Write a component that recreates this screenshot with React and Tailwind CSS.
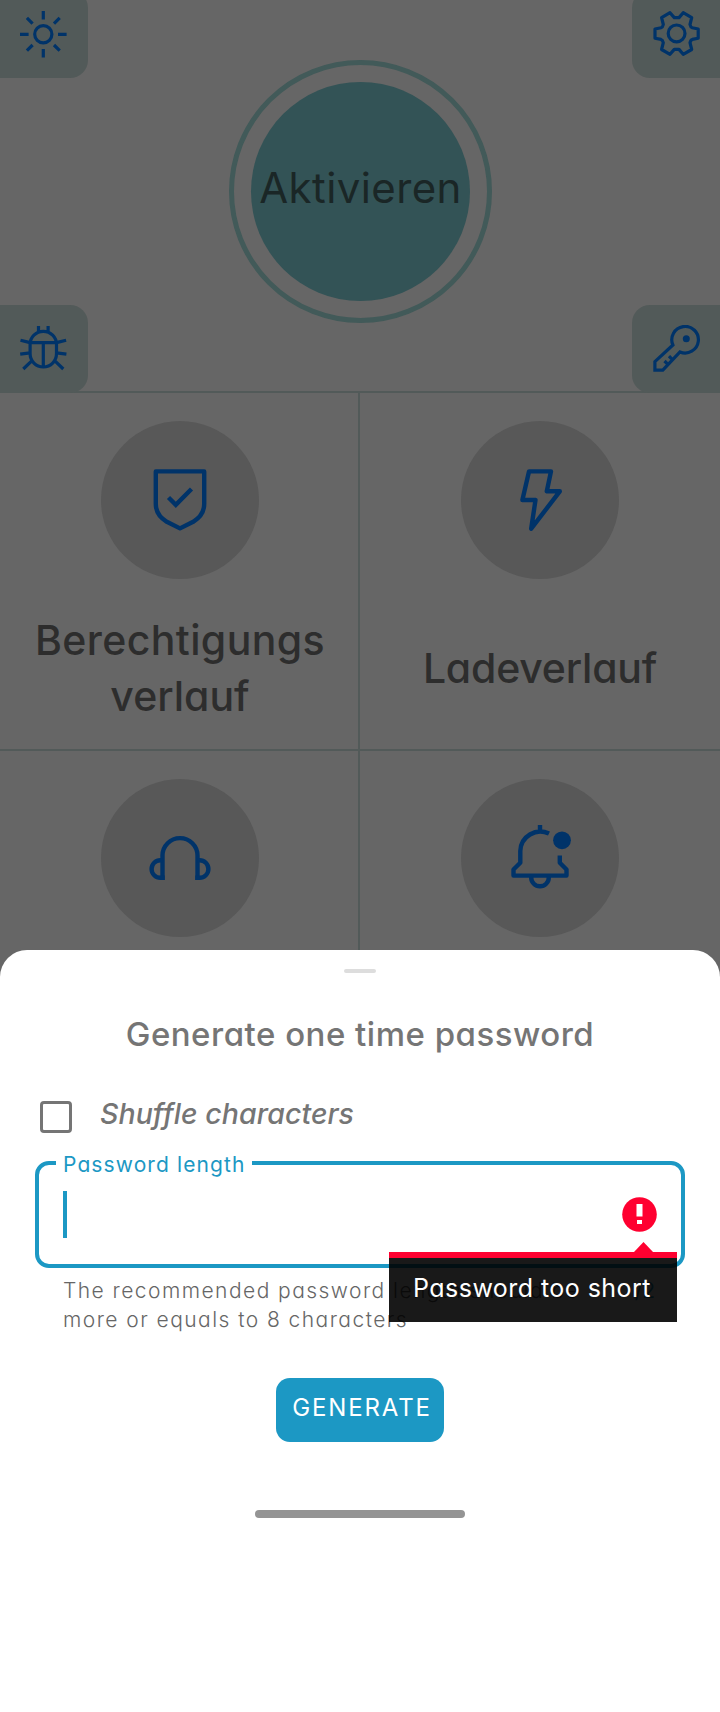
const C = '#003369';

function Tab({ side, children }) {
  const shape = side === 'left' ? 'rounded-r-[18px] pr-0.5' : 'rounded-l-[18px] pl-0.5';
  return <div className={`flex h-[88px] w-[88px] items-center justify-center bg-[#525a59] ${shape}`}>{children}</div>;
}

// Small icons share a 48px canvas centred in each tab.
function TabIcon({ children }) {
  return (
    <svg width="48" height="48" viewBox="0 0 48 48" fill="none" stroke={C} strokeWidth="3.2">
      {children}
    </svg>
  );
}

function Sun() {
  return (
    <TabIcon>
      <circle cx="24.3" cy="24.3" r="8.6" />
      <path d="M24.300 1v8.600M24.300 39v8.600M1 24.300h8.600M39 24.300h8.600M7.900 7.900l5.700 5.700M35 35l5.700 5.700M40.700 7.900l-5.700 5.700M13.600 35l-5.700 5.700" />
    </TabIcon>
  );
}

function Bug() {
  return (
    <TabIcon>
      <path d="M24.300 6.300c7.400 0 13.200 5.800 13.200 13.200v9c0 7.600-5.800 13.400-13.200 13.400S11.100 36.100 11.100 28.500v-9C11.100 12.100 16.900 6.300 24.300 6.300zM11.100 17.700h26.400M24.300 17.700v24M19.500 1v6M29.100 1v6M1.500 15.200l9.600 2.400M47.100 15.200l-9.600 2.400M1.200 29.200l9.900-1.300M47.400 29.200l-9.900-1.300M4.300 44l8.700-8.400M44.300 44l-8.700-8.400" />
    </TabIcon>
  );
}

function Gear() {
  return (
    <TabIcon>
      <circle cx="23.600" cy="23.400" r="8.400" />
      <path strokeLinejoin="round" d="M17 2.700 21.300 7.600H26L30.200 2.700 38.700 7.600 37 14.500Q37.500 17.200 39.300 17.800L45.200 19V28.200L39.300 29.400Q37.500 30 37 32.700L38.700 39.500 30.200 44.300 26 39.400H21.300L17 44.300 8.600 39.500 10.300 32.700Q9.800 30 8 29.400L2 28.200V19L8 17.800Q9.800 17.200 10.300 14.500L8.600 7.600z" />
    </TabIcon>
  );
}

function Key() {
  return (
    <TabIcon>
      <path d="M1.900 45.200V36.600L19.900 20A13.300 13.300 0 1 1 27 27L9.800 45.200zM11.500 36l3.200 3.200M16 31.200l3.200 3.200" />
      <circle cx="33.300" cy="13.700" r="3.500" fill={C} stroke="none" />
    </TabIcon>
  );
}

// Tile icons share an 80px canvas centred in the round badge.
function TileIcon({ children }) {
  return (
    <svg width="80" height="80" viewBox="0 0 80 80" fill="none" stroke={C} strokeWidth="4.400">
      {children}
    </svg>
  );
}

function Shield() {
  return (
    <TileIcon>
      <path strokeLinejoin="round" d="M15.800 11.400h48.400v32.600c0 8-4 13.500-11 17.800L40 68.400 26.800 61.800C19.800 57.500 15.800 52 15.800 44z" />
      <path d="M28.500 37.500l7.300 7.300L51.500 29" />
    </TileIcon>
  );
}

function Bolt() {
  return (
    <TileIcon>
      <path strokeLinejoin="round" d="M29 11.400h22l-4.200 19.900h13L31.200 68.700 35.500 40H22.400z" />
    </TileIcon>
  );
}

function Headphones() {
  return (
    <TileIcon>
      <path d="M22.500 62V37.600a17.500 17.500 0 0 1 35 0V62" />
      <path d="M22.500 42.200h-2.100a8.800 8.800 0 0 0 0 17.600h4.300M57.500 42.200h2.100a8.800 8.800 0 0 1 0 17.600h-4.300" />
    </TileIcon>
  );
}

function Bell() {
  return (
    <TileIcon>
      <path strokeLinejoin="round" d="M49 15.600A20 20 0 0 0 20.300 33V44.800L13.500 51.500v6.100h53v-6.100L59.800 44.800V37.600M40 12V7" />
      <path d="M31.200 58v1.500a8.800 8.800 0 0 0 17.600 0V58" />
      <circle cx="62" cy="22.300" r="8.900" fill={C} stroke="none" />
    </TileIcon>
  );
}

function Tile({ icon, lines = [], divider }) {
  return (
    <div className={`flex h-[358px] w-[360px] flex-col items-center border-b-2 border-b-[#525a59] pt-7 ${divider ? 'border-r-2 border-r-[#525a59] pl-0.5' : ''}`}>
      <div className="flex h-[158px] w-[158px] shrink-0 items-center justify-center rounded-full bg-[#585858]">{icon}</div>
      <div className="mt-2 flex h-[170px] flex-col justify-center text-center text-[41px] leading-[56px] font-medium text-[#2d2d2d]">
        {lines.map((l) => (
          <span key={l.text} className={`whitespace-nowrap ${l.cls}`}>{l.text}</span>
        ))}
      </div>
    </div>
  );
}

function Tooltip() {
  return (
    <div className="absolute top-[77px] right-[4px] w-[288px]">
      <svg className="ml-[245px] block" width="19" height="10" viewBox="0 0 19 10"><path d="M9.500 0L19 10H0z" fill="#ff0030" /></svg>
      <div className="flex h-[70px] items-center justify-center border-t-[6px] border-t-[#ff0030] bg-black/90 pr-0.5 pb-0.5 text-[25px] tracking-[0.45px] whitespace-nowrap text-white">
        Password too short
      </div>
    </div>
  );
}

export default function App() {
  return (
    <div className="flex h-[1712px] w-[720px] flex-col overflow-hidden bg-[#666666] font-['Inter','Liberation_Sans',sans-serif] [font-feature-settings:'cv11']">
      <header className="flex h-[393px] shrink-0 justify-between border-b-2 border-[#525a59]">
        <div className="-mt-2.5 -mb-0.5 flex flex-col justify-between">
          <Tab side="left"><Sun /></Tab>
          <Tab side="left"><Bug /></Tab>
        </div>
        <div className="mt-[60px] flex h-[263px] w-[263px] items-center justify-center rounded-full border-[5px] border-[#425a59]">
          <div className="flex h-[219px] w-[219px] items-center justify-center rounded-full bg-[#335356] text-[42px] text-[#1a2626]">
            <span className="-mt-[8px] ml-px tracking-[0.4px]">Aktivieren</span>
          </div>
        </div>
        <div className="-mt-2.5 -mb-0.5 flex flex-col justify-between">
          <Tab side="right"><Gear /></Tab>
          <Tab side="right"><Key /></Tab>
        </div>
      </header>

      <main className="grid h-[584px] shrink-0 grid-cols-2 overflow-hidden">
        <Tile divider icon={<Shield />} lines={[{ text: 'Berechtigungs', cls: 'tracking-[0.4px]' }, { text: 'verlauf', cls: 'tracking-[0px]' }]} />
        <Tile icon={<Bolt />} lines={[{ text: 'Ladeverlauf', cls: 'tracking-[-0.2px]' }]} />
        <Tile divider icon={<Headphones />} />
        <Tile icon={<Bell />} />
      </main>

      <section className="relative z-10 -mt-[27px] flex grow flex-col items-center rounded-t-[27px] bg-white pt-[19px]">
        <div className="h-1 w-8 rounded-full bg-[#dddddd]" />
        <h1 className="mt-[37px] text-[33px] leading-[48px] font-medium tracking-[0.5px] whitespace-nowrap text-[#757575]">Generate one time password</h1>
        <label className="mt-[40px] flex h-[38px] w-[640px] items-center">
          <span className="h-8 w-8 rounded-[4px] border-[3px] border-[#757575]" />
          <span className="-mt-1.5 ml-[28px] text-[28.500px] font-medium tracking-[0.05px] whitespace-nowrap text-[#757575] italic">Shuffle characters</span>
        </label>
        <div className="relative mt-[25px] flex h-[107px] w-[650px] items-center justify-between rounded-[14px] border-4 border-[#1c98c4] pr-[24px] pl-[24px]">
          <span className="absolute -top-[12px] left-[17px] bg-white pr-[7px] pl-[7px] text-[21px] leading-6 tracking-[1.1px] whitespace-nowrap text-[#1c98c4]">Password length</span>
          <span className="h-[47px] w-1 bg-[#1c98c4]" />
          <svg width="35" height="35" viewBox="0 0 35 35"><circle cx="17.500" cy="17.500" r="17.300" fill="#ff0030" /><path d="M14.500 7h6v12.500h-6zM15 23h5v4h-5z" fill="#fff" /></svg>
          <Tooltip />
        </div>
        <div className="mt-[8px] flex w-[594px] justify-between text-[21px] leading-[29px] text-[#666666]">
          <p className="font-light tracking-[1.450px] whitespace-nowrap">The recommended password length should be<br />more or equals to 8 characters</p>
          <span className="mr-0.5 text-[#1c98c4]">/2</span>
        </div>
        <button className="mt-[44px] h-16 w-[168px] rounded-[14px] bg-[#1c98c4] pb-1 pl-1 text-[24px] tracking-[1.85px] text-white">GENERATE</button>
        <div className="mt-[68px] h-2 w-[210px] rounded-full bg-[#949494]" />
      </section>
    </div>
  );
}
